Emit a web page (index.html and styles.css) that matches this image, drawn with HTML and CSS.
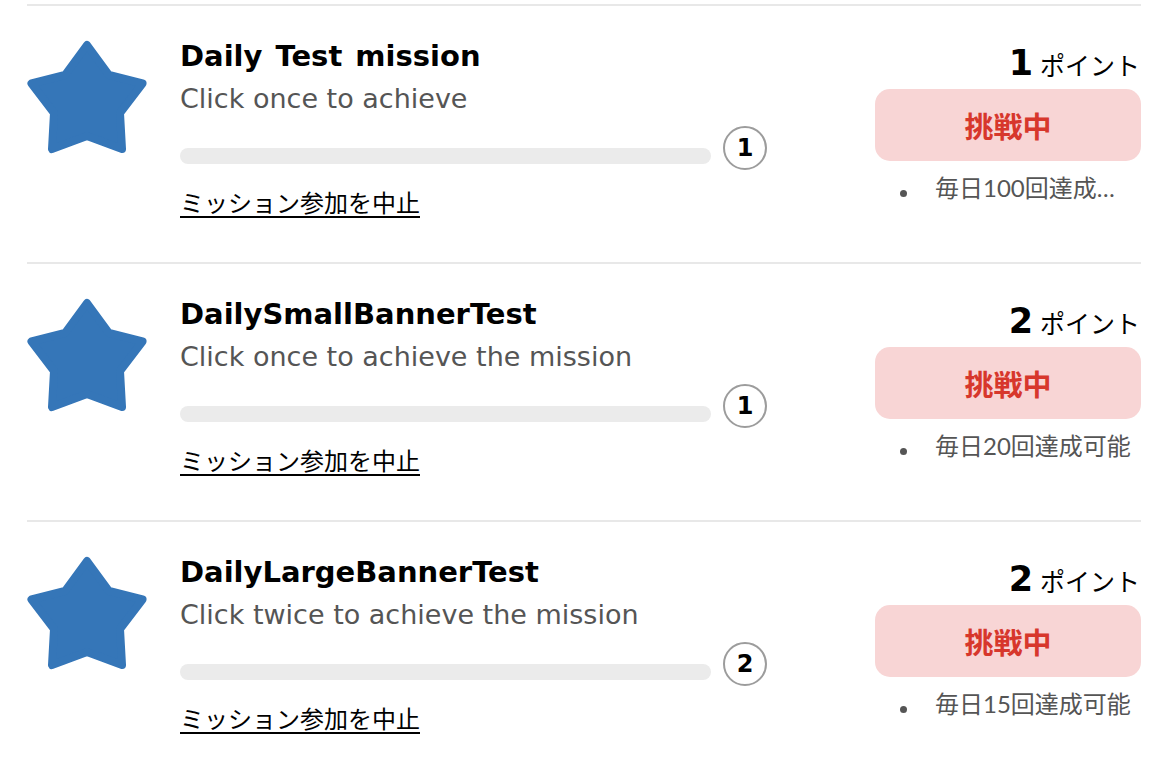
FILE: index.html
```html
<!DOCTYPE html>
<html lang="ja">
<head>
<meta charset="utf-8">
<title>Missions</title>
<link rel="stylesheet" href="styles.css">
</head>
<body>
<div class="missions">
  <div class="mission">
    <div class="icon">
      <svg viewBox="0 0 121 118" width="121" height="118"><polygon points="60,6 82,36 115.5,44.5 93,74 95,110 60,97 25,110 27,74 4.5,44.5 38,36" fill="#3576b8" stroke="#3576b8" stroke-width="8" stroke-linejoin="round"/></svg>
    </div>
    <div class="body">
      <div class="title">Daily Test mission</div>
      <div class="desc">Click once to achieve</div>
      <div class="progress">
        <div class="bar"></div>
        <div class="count">1</div>
      </div>
      <a class="quit" href="#">ミッション参加を中止</a>
    </div>
    <div class="side">
      <div class="points"><span class="num">1</span><span class="unit">ポイント</span></div>
      <div class="status">挑戦中</div>
      <ul class="notes"><li><span class="dot"></span><span class="note">毎日100回達成可能</span></li></ul>
    </div>
  </div>

  <div class="mission">
    <div class="icon">
      <svg viewBox="0 0 121 118" width="121" height="118"><polygon points="60,6 82,36 115.5,44.5 93,74 95,110 60,97 25,110 27,74 4.5,44.5 38,36" fill="#3576b8" stroke="#3576b8" stroke-width="8" stroke-linejoin="round"/></svg>
    </div>
    <div class="body">
      <div class="title">DailySmallBannerTest</div>
      <div class="desc">Click once to achieve the mission</div>
      <div class="progress">
        <div class="bar"></div>
        <div class="count">1</div>
      </div>
      <a class="quit" href="#">ミッション参加を中止</a>
    </div>
    <div class="side">
      <div class="points"><span class="num">2</span><span class="unit">ポイント</span></div>
      <div class="status">挑戦中</div>
      <ul class="notes"><li><span class="dot"></span><span class="note">毎日20回達成可能</span></li></ul>
    </div>
  </div>

  <div class="mission">
    <div class="icon">
      <svg viewBox="0 0 121 118" width="121" height="118"><polygon points="60,6 82,36 115.5,44.5 93,74 95,110 60,97 25,110 27,74 4.5,44.5 38,36" fill="#3576b8" stroke="#3576b8" stroke-width="8" stroke-linejoin="round"/></svg>
    </div>
    <div class="body">
      <div class="title">DailyLargeBannerTest</div>
      <div class="desc">Click twice to achieve the mission</div>
      <div class="progress">
        <div class="bar"></div>
        <div class="count">2</div>
      </div>
      <a class="quit" href="#">ミッション参加を中止</a>
    </div>
    <div class="side">
      <div class="points"><span class="num">2</span><span class="unit">ポイント</span></div>
      <div class="status">挑戦中</div>
      <ul class="notes"><li><span class="dot"></span><span class="note">毎日15回達成可能</span></li></ul>
    </div>
  </div>
</div>
</body>
</html>
```

FILE: styles.css
```css
html, body {
  margin: 0;
  padding: 0;
  background: #fff;
}

body {
  font-family: "DejaVu Sans", "Noto Sans CJK JP", sans-serif;
  overflow: hidden;
}

.missions {
  padding: 4px 25px 0 27px;
}

.mission {
  display: flex;
  align-items: flex-start;
  height: 258px;
  box-sizing: border-box;
  border-top: 2px solid #e8e8e8;
}

.icon {
  width: 121px;
  height: 118px;
  margin-top: 33px;
  margin-right: 32px;
  flex: none;
}

.icon svg {
  display: block;
}

.body {
  flex: 1;
  min-width: 0;
  padding-top: 32px;
}

.title {
  font-size: 29px;
  font-weight: bold;
  line-height: 36px;
  word-spacing: 3px;
  color: #000;
  white-space: nowrap;
}

.desc {
  margin-top: 9px;
  font-size: 27px;
  line-height: 32px;
  color: #555;
  white-space: nowrap;
}

.progress {
  display: flex;
  align-items: flex-end;
  gap: 12px;
  margin-top: 11px;
}

.bar {
  flex: 1;
  height: 16px;
  margin-bottom: 6px;
  border-radius: 8px;
  background: #ebebeb;
}

.count {
  width: 44px;
  height: 44px;
  box-sizing: border-box;
  border: 2px solid #9c9c9c;
  border-radius: 50%;
  display: flex;
  align-items: center;
  justify-content: center;
  font-size: 24px;
  font-weight: bold;
  color: #000;
}

.quit {
  display: inline-block;
  margin-top: 15px;
  font-family: "Noto Sans CJK JP", sans-serif;
  font-size: 24px;
  line-height: 34px;
  color: #000;
  text-decoration: underline;
  text-decoration-thickness: 2px;
  text-underline-offset: 4px;
}

.side {
  width: 266px;
  flex: none;
  margin-left: 108px;
  padding-top: 37px;
}

.points {
  display: flex;
  justify-content: flex-end;
  align-items: baseline;
  gap: 7px;
}

.num {
  font-size: 35px;
  font-weight: bold;
  line-height: 40px;
  color: #000;
}

.unit {
  font-family: "Noto Sans CJK JP", sans-serif;
  font-size: 25px;
  line-height: 40px;
  color: #000;
  margin-right: 1px;
}

.status {
  margin-top: 5px;
  height: 72px;
  border-radius: 15px;
  background: #f8d5d5;
  color: #d7372c;
  font-family: "Noto Sans CJK JP", sans-serif;
  font-size: 29px;
  font-weight: bold;
  display: flex;
  align-items: center;
  justify-content: center;
}

.notes {
  list-style: none;
  margin: 10px 0 0;
  padding: 0 0 0 25px;
}

.notes li {
  display: flex;
  align-items: center;
  gap: 28px;
}

.dot {
  flex: none;
  width: 7px;
  height: 7px;
  margin-top: 10px;
  border-radius: 50%;
  background: #555;
}

.note {
  flex: 1;
  min-width: 0;
  margin-right: 8px;
  font-family: "Lato", "Noto Sans CJK JP", sans-serif;
  font-size: 24px;
  line-height: 34px;
  color: #555;
  white-space: nowrap;
  overflow: hidden;
  text-overflow: ellipsis;
}
```
